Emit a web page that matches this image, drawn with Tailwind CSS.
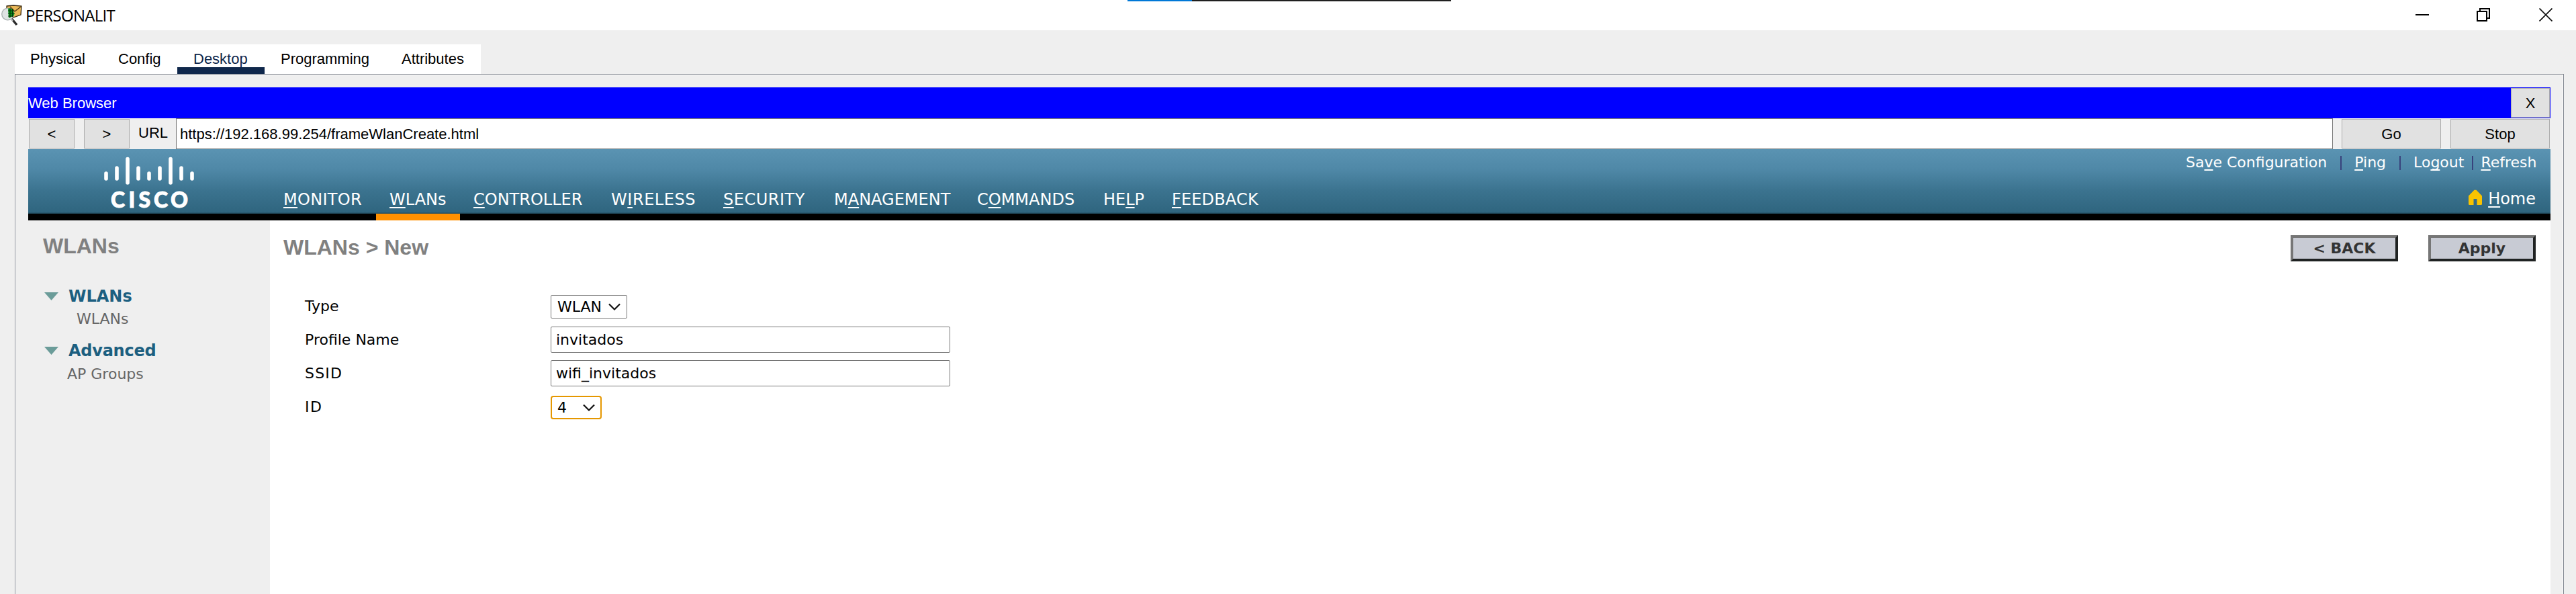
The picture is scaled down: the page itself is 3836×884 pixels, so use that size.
<!DOCTYPE html>
<html lang="en">
<head>
<meta charset="utf-8">
<title>PERSONALIT</title>
<script src="https://cdn.jsdelivr.net/npm/@tailwindcss/browser@4"></script>
</head>
<body class="relative flex h-[884px] w-[3836px] flex-col overflow-hidden bg-[#efefef] font-['Liberation_Sans',Arial,sans-serif] text-[22px] text-black">

<!-- Docked progress strip on the top edge -->
<div class="absolute left-[1679px] top-0 flex h-[2px] w-[482px] bg-[#1f1f1f]"><div class="w-24 bg-[#0078d7]"></div></div>

<!-- Title bar -->
<header class="flex h-[45px] shrink-0 items-center bg-white pl-[2px]">
  <svg class="h-[32px] w-[32px] shrink-0" viewBox="0 0 32 32">
    <path d="M8 2 L18 1 L30 2 L29 15 L15 20 L8 17Z" fill="#e9b757" stroke="#3a2a10" stroke-width="1.3"/>
    <path d="M13 3 L20 10 L29 3" fill="none" stroke="#4a3415" stroke-width="1.3"/>
    <circle cx="9.500" cy="14" r="8.800" fill="#dfe3e3" stroke="#a9b0b0" stroke-width="1.300"/>
    <path d="M10 5.500 L15 6 Q20 11 19 16 L11 20Z" fill="#0b9a1c"/>
    <path d="M10 9h9M10 13h10M10 17h8M13 5v14M16.500 6v12" stroke="#04330a" stroke-width="1.200"/>
    <path d="M15.500 21 L23 30" stroke="#2c2c2c" stroke-width="3.500"/>
    <path d="M14.500 21 L17 24" stroke="#b9b9b9" stroke-width="2"/>
  </svg>
  <span class="ml-[4px] font-['Open_Sans',sans-serif] text-[24px] leading-[43px] tracking-[-0.700px]">PERSONALIT</span>
  <div class="ml-auto flex -translate-y-px items-center pr-[35px]">
    <svg class="h-5 w-5" viewBox="0 0 20 20"><path d="M0 10h20" stroke="#000" stroke-width="2"/></svg>
    <svg class="ml-[71px] h-5 w-5" viewBox="0 0 20 20" fill="none" stroke="#000" stroke-width="2"><path d="M1 5h14v14H1z"/><path d="M5 5V1h14v14h-4"/></svg>
    <svg class="ml-[73px] h-5 w-5" viewBox="0 0 20 20"><path d="M.5.5l19 19M19.500.5l-19 19" stroke="#111" stroke-width="1.700"/></svg>
  </div>
</header>

<!-- Device tabs -->
<nav class="ml-[22px] mt-[21px] flex h-[44px] w-[694px] shrink-0 bg-white leading-[44px]">
  <div class="w-[129px] pl-[23px]">Physical</div>
  <div class="w-[113px] pl-[25px]">Config</div>
  <div class="h-[44px] w-[130px] bg-[linear-gradient(#0f274b,#0f274b)] bg-[length:100%_10px] bg-bottom bg-no-repeat pl-[24px] text-[#0f274b]">Desktop</div>
  <div class="w-[181px] pl-[24px]">Programming</div>
  <div class="pl-[23px]">Attributes</div>
</nav>

<main class="ml-[22px] flex w-[3796px] flex-1 flex-col border border-b-0 border-[#828790] pl-[19px] pr-[19px] pt-[19px] shadow-[inset_0_1px_0_#fff,inset_-1px_0_0_#fff,inset_1px_0_0_#fff]">
  <!-- Web browser caption -->
  <div class="flex h-[46px] shrink-0 items-center justify-between bg-[#0000ff] pr-px text-white">
    <span>Web Browser</span>
    <div class="flex h-[44px] w-[58px] items-center justify-center border border-[#adadad] bg-[#e1e1e1] text-black">X</div>
  </div>
  <!-- Address row -->
  <div class="flex h-[46px] shrink-0 items-center pl-px pr-px">
    <div class="flex h-[44px] w-[68px] items-center justify-center border border-[#adadad] bg-[#e1e1e1]">&lt;</div>
    <div class="ml-[14px] flex h-[44px] w-[68px] items-center justify-center border border-[#adadad] bg-[#e1e1e1]">&gt;</div>
    <div class="w-[69px] pb-[4px] pl-[13px]">URL</div>
    <div class="flex h-[46px] flex-1 items-center border border-[#7a7a7a] bg-white pl-[5px]">https://192.168.99.254/frameWlanCreate.html</div>
    <div class="ml-[13px] flex h-[44px] w-[148px] items-center justify-center border border-[#adadad] bg-[#e1e1e1]">Go</div>
    <div class="ml-[14px] flex h-[44px] w-[148px] items-center justify-center border border-[#adadad] bg-[#e1e1e1]">Stop</div>
  </div>

  <!-- Controller header -->
  <div class="flex h-[106px] shrink-0 bg-[linear-gradient(to_bottom,#5a93b2_0px,#4f88a7_30px,#3b738f_62px,#2f657f_94px,#234e62_95px,#234e62_96px,#000_96px)] font-[Verdana,'DejaVu_Sans',sans-serif] text-[24px] text-white">
    <div class="w-[360px] pl-[113px] pt-[10px]">
      <svg class="h-[80px] w-[136px]" viewBox="155 232 136 80">
        <g stroke="#fff" stroke-width="5.600" stroke-linecap="round">
          <path d="M158 258v8M174 250v16M190 236.500v35.500M206 250v16M222 258v8M238 250v16M254 236.500v35.500M270 250v16M286 258v8"/>
        </g>
        <text y="308.500" x="165 191.500 206.500 229 254" fill="#fff" stroke="#fff" stroke-width="1" font-family="Lato" font-weight="900" font-size="32">CISCO</text>
      </svg>
    </div>
    <div class="flex items-end leading-[42px] [&_u]:decoration-2 [&_u]:underline-offset-[3px] [&_u]:[text-decoration-skip-ink:none]">
      <div class="h-[52px] w-[158px] pl-[20px] tracking-[0.300px]"><u>M</u>ONITOR</div>
      <div class="h-[52px] w-[125px] border-b-[10px] border-[#ff9000] pl-[20px]"><u>W</u>LANs</div>
      <div class="h-[52px] w-[205px] pl-[20px]"><u>C</u>ONTROLLER</div>
      <div class="h-[52px] w-[167px] pl-[20px] tracking-[0.550px]">W<u>I</u>RELESS</div>
      <div class="h-[52px] w-[165px] pl-[20px] tracking-[0.520px]"><u>S</u>ECURITY</div>
      <div class="h-[52px] w-[213px] pl-[20px]">M<u>A</u>NAGEMENT</div>
      <div class="h-[52px] w-[188px] pl-[20px]">C<u>O</u>MMANDS</div>
      <div class="h-[52px] w-[102px] pl-[20px]">HE<u>L</u>P</div>
      <div class="h-[52px] pl-[20px] tracking-[0.150px]"><u>F</u>EEDBACK</div>
    </div>
    <div class="ml-auto flex flex-col whitespace-nowrap pr-[21px] pt-[5px] [&_u]:decoration-2 [&_u]:underline-offset-[3px] [&_u]:[text-decoration-skip-ink:none]">
      <div class="flex h-[30px] w-[522px] items-center text-[22px] leading-[30px] [&_i]:shrink-0">
        <span>Sa<u>v</u>e Configuration</span>
        <i class="ml-[20px] h-[21px] w-[2px] bg-[#38427c]"></i>
        <span class="ml-[19px]"><u>P</u>ing</span>
        <i class="ml-[20px] h-[21px] w-[2px] bg-[#38427c]"></i>
        <span class="ml-[19px]">Lo<u>g</u>out</span>
        <i class="ml-[12px] h-[21px] w-[2px] bg-[#38427c]"></i>
        <span class="ml-[11px]"><u>R</u>efresh</span>
      </div>
      <div class="ml-auto mt-[22px] flex h-[34px] items-center pr-px leading-[34px]">
        <svg class="-mt-[5px] mr-[9px] h-[24px] w-[20px]" viewBox="0 0 20 24"><path d="M8.500.7h3L20 9.500V21.500a1.500 1.500 0 0 1-1.500 1.500H12.500V14H7.500v9H1.500A1.500 1.500 0 0 1 0 21.500V9.500Z" fill="#f9c300"/></svg>
        <span><u>H</u>ome</span>
      </div>
    </div>
  </div>

  <!-- Page body -->
  <div class="flex flex-1 font-[Verdana,'DejaVu_Sans',sans-serif]">
    <aside class="flex w-[360px] flex-col bg-[#efefef] pl-[22px]">
      <h2 class="h-[76px] font-['Liberation_Sans',Arial,sans-serif] text-[32px] font-bold leading-[76px] text-[#808080]">WLANs</h2>
      <div class="mt-[18px] flex h-[38px] items-center pl-[2px] text-[24px] font-bold text-[#1c5f80]"><svg class="mr-[15px] h-[12px] w-[21px]" viewBox="0 0 21 12"><path d="M0 0h21L10.500 12z" fill="#6b9c99"/></svg><span>WLANs</span></div>
      <div class="h-[30px] pl-[50px] leading-[30px] text-[#666]">WLANs</div>
      <div class="mt-[13px] flex h-[38px] items-center pl-[2px] text-[24px] font-bold text-[#1c5f80]"><svg class="mr-[15px] h-[12px] w-[21px]" viewBox="0 0 21 12"><path d="M0 0h21L10.500 12z" fill="#6b9c99"/></svg><span class="tracking-[-0.250px]">Advanced</span></div>
      <div class="mt-[1px] h-[30px] pl-[36px] leading-[30px] text-[#666]">AP Groups</div>
    </aside>
    <section class="flex flex-1 flex-col bg-white">
      <div class="flex h-[80px] items-start pl-[20px] pr-[22px]">
        <h1 class="font-['Liberation_Sans',Arial,sans-serif] text-[32px] font-bold leading-[80px] text-[#808080]">WLANs &gt; New</h1>
        <div class="ml-auto mt-[22px] flex gap-[45px] font-bold text-[#333]">
          <div class="flex h-[39px] w-[160px] items-center justify-center border-4 border-b-[#1f2222] border-l-[#767676] border-r-[#1f2222] border-t-[#767676] bg-[#c8cbd4]">&lt; BACK</div>
          <div class="flex h-[39px] w-[160px] items-center justify-center border-4 border-b-[#1f2222] border-l-[#767676] border-r-[#1f2222] border-t-[#767676] bg-[#c8cbd4]">Apply</div>
        </div>
      </div>
      <div class="mt-[23px] flex flex-col pl-[52px]">
        <div class="flex h-[50px] items-start"><div class="w-[366px] leading-[50px]">Type</div>
          <div class="mt-[8px] flex h-[35px] w-[114px] items-center justify-between rounded-[2px] border border-[#767676] pl-[9px] pr-[9px]"><span>WLAN</span><svg class="h-[12px] w-[18px]" viewBox="0 0 18 12"><path d="M1 1.500l8 8 8-8" fill="none" stroke="#111" stroke-width="2.200"/></svg></div></div>
        <div class="flex h-[50px] items-start"><div class="w-[366px] leading-[50px]">Profile Name</div>
          <div class="mt-[5px] flex h-[39px] w-[595px] items-center rounded-[2px] border border-[#767676] pl-[7px]">invitados</div></div>
        <div class="flex h-[50px] items-start"><div class="w-[366px] leading-[50px] tracking-[1.200px]">SSID</div>
          <div class="mt-[5px] flex h-[39px] w-[595px] items-center rounded-[2px] border border-[#767676] pl-[7px]">wifi_invitados</div></div>
        <div class="flex h-[50px] items-start"><div class="w-[366px] leading-[50px] tracking-[1.400px]">ID</div>
          <div class="mt-[8px] flex h-[35px] w-[76px] items-center justify-between rounded-[4px] border-2 border-[#e59700] pl-[8px] pr-[8px]"><span>4</span><svg class="h-[12px] w-[18px]" viewBox="0 0 18 12"><path d="M1 1.500l8 8 8-8" fill="none" stroke="#111" stroke-width="2.200"/></svg></div></div>
      </div>
    </section>
  </div>
</main>
</body>
</html>
